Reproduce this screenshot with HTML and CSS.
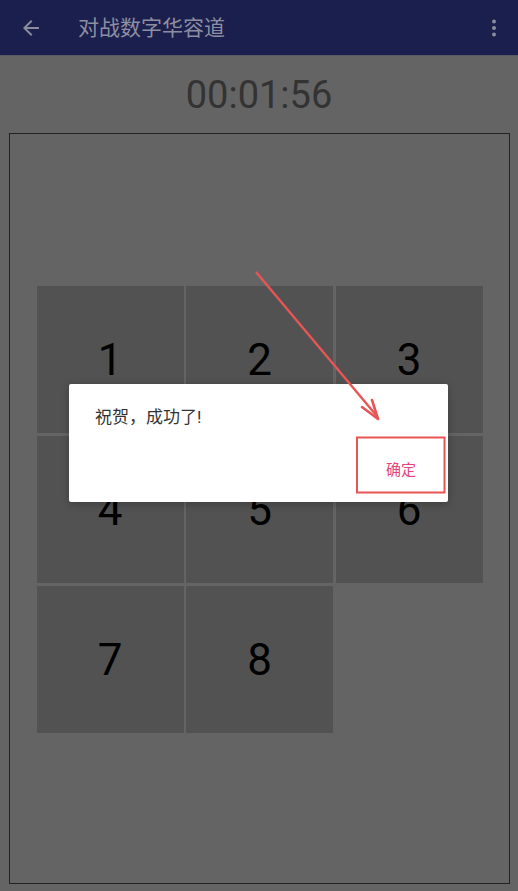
FILE: index.html
```html
<!DOCTYPE html>
<html lang="zh">
<head>
<meta charset="utf-8">
<link rel="stylesheet" href="styles.css">
</head>
<body>
<header class="appbar">
  <svg class="back" width="24" height="24" viewBox="0 0 24 24"><path d="M20 11H7.83l5.59-5.59L12 4l-8 8 8 8 1.41-1.41L7.83 13H20v-2z" fill="currentColor"/></svg>
  <div class="title">对战数字华容道</div>
  <svg class="more" width="24" height="24" viewBox="0 0 24 24"><circle cx="12" cy="5.5" r="2" fill="currentColor"/><circle cx="12" cy="12" r="2" fill="currentColor"/><circle cx="12" cy="18.5" r="2" fill="currentColor"/></svg>
</header>
<main class="content">
  <div class="timer">00:01:56</div>
  <div class="board">
    <div class="grid">
      <div class="tile">1</div>
      <div class="tile">2</div>
      <div class="tile">3</div>
      <div class="tile">4</div>
      <div class="tile">5</div>
      <div class="tile">6</div>
      <div class="tile">7</div>
      <div class="tile">8</div>
      <div class="empty"></div>
    </div>
  </div>
</main>
<div class="dialog">
  <div class="message">祝贺，成功了!</div>
  <div class="actions">
    <div class="btn">确定</div>
  </div>
</div>
<svg class="annot" width="518" height="891" viewBox="0 0 518 891">
  <line x1="256" y1="272" x2="376" y2="415" stroke="#e85555" stroke-width="2.4"/>
  <path d="M378 419 L362 407 M378 419 L372 400" stroke="#e85555" stroke-width="2.6" stroke-linecap="round" fill="none"/>
  <rect x="357" y="437.5" width="87.5" height="55" fill="none" stroke="#e85555" stroke-width="2"/>
</svg>
</body>
</html>
```
FILE: styles.css
```css
* { box-sizing: border-box; }
html, body { margin: 0; padding: 0; }
body {
  width: 518px;
  height: 891px;
  overflow: hidden;
  background: #646464;
  font-family: Roboto, "Noto Sans CJK SC", sans-serif;
  position: relative;
}
.appbar {
  height: 56px;
  background: #1b1f4e;
  color: #8d8fa3;
  display: flex;
  align-items: center;
  padding: 0 12px 0 19px;
  border-bottom: 1px solid #5a5a66;
}
.back { color: #8a8c9c; }
.title {
  margin-left: 35px;
  font-size: 21px;
  flex: 1;
  color: #8d8fa0;
  margin-top: -3px;
}
.more { color: #8a8c9c; }
.content {
  display: flex;
  flex-direction: column;
}
.timer {
  height: 77px;
  display: flex;
  align-items: center;
  justify-content: center;
  font-size: 38px;
  color: #333333;
}
.board {
  margin: 0 8px 0 9px;
  height: 751px;
  border: 1px solid #222222;
  display: flex;
  align-items: center;
  justify-content: center;
}
.grid {
  display: grid;
  grid-template-columns: repeat(3, 147px);
  grid-template-rows: repeat(3, 147px);
  gap: 3px 2.5px;
  margin-top: 2px;
}
.tile {
  background: #525252;
  display: flex;
  align-items: center;
  justify-content: center;
  font-size: 44px;
  color: #000000;
}
.dialog {
  position: absolute;
  left: 69px;
  top: 384px;
  width: 379px;
  height: 118px;
  background: #ffffff;
  border-radius: 2px;
  box-shadow: 0 2px 8px rgba(0,0,0,0.25);
  display: flex;
  flex-direction: column;
}
.message {
  padding: 19px 0 0 26px;
  font-size: 17px;
  color: #333333;
  height: 56px;
}
.actions {
  display: flex;
  justify-content: flex-end;
  padding-right: 32px;
}
.btn {
  font-size: 15px;
  color: #e8437d;
  padding-top: 18px;
}
.annot {
  position: absolute;
  left: 0;
  top: 0;
  pointer-events: none;
}
```
